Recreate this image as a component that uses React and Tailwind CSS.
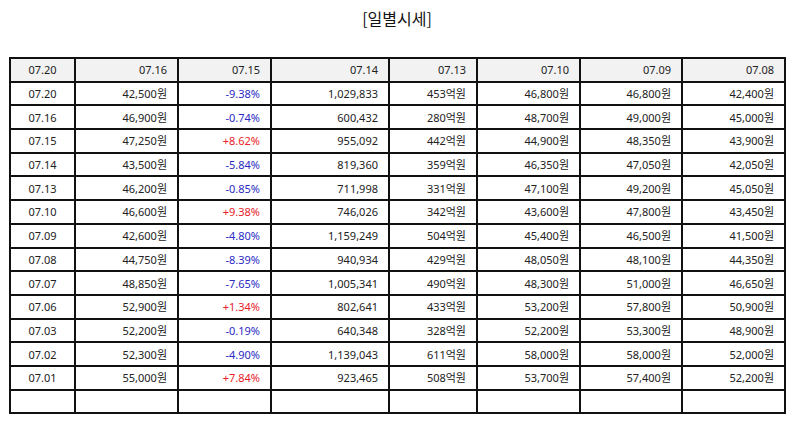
import React from 'react';

const headers = ['07.20', '07.16', '07.15', '07.14', '07.13', '07.10', '07.09', '07.08'];

const rows = [
  ['07.20', '42,500원', '-9.38%', '1,029,833', '453억원', '46,800원', '46,800원', '42,400원'],
  ['07.16', '46,900원', '-0.74%', '600,432', '280억원', '48,700원', '49,000원', '45,000원'],
  ['07.15', '47,250원', '+8.62%', '955,092', '442억원', '44,900원', '48,350원', '43,900원'],
  ['07.14', '43,500원', '-5.84%', '819,360', '359억원', '46,350원', '47,050원', '42,050원'],
  ['07.13', '46,200원', '-0.85%', '711,998', '331억원', '47,100원', '49,200원', '45,050원'],
  ['07.10', '46,600원', '+9.38%', '746,026', '342억원', '43,600원', '47,800원', '43,450원'],
  ['07.09', '42,600원', '-4.80%', '1,159,249', '504억원', '45,400원', '46,500원', '41,500원'],
  ['07.08', '44,750원', '-8.39%', '940,934', '429억원', '48,050원', '48,100원', '44,350원'],
  ['07.07', '48,850원', '-7.65%', '1,005,341', '490억원', '48,300원', '51,000원', '46,650원'],
  ['07.06', '52,900원', '+1.34%', '802,641', '433억원', '53,200원', '57,800원', '50,900원'],
  ['07.03', '52,200원', '-0.19%', '640,348', '328억원', '52,200원', '53,300원', '48,900원'],
  ['07.02', '52,300원', '-4.90%', '1,139,043', '611억원', '58,000원', '58,000원', '52,000원'],
  ['07.01', '55,000원', '+7.84%', '923,465', '508억원', '53,700원', '57,400원', '52,200원'],
];

const widths = ['w-[65px]', 'w-[103px]', 'w-[93px]', 'w-[118px]', 'w-[88px]', 'w-[103px]', 'w-[102px]', 'w-[103px]'];

const cell = 'border-2 border-[#111] h-[23.7px] px-[10px] py-0 text-[11px] leading-none';

export default function App() {
  return (
    <div className="w-[794px] h-[425px] bg-white text-[#222] font-['Noto_Sans','Noto_Sans_CJK_KR',sans-serif]">
      <h2 className="pt-[6px] h-[57px] text-center text-[16px] text-[#111] font-['Noto_Sans_CJK_KR',sans-serif]">[일별시세]</h2>
      <table className="ml-[9px] w-[775px] border-collapse table-fixed">
        <colgroup>
          {widths.map((w, i) => (
            <col key={i} className={w} />
          ))}
        </colgroup>
        <thead>
          <tr className="bg-[#f2f2f2]">
            {headers.map((h, i) => (
              <th key={i} className={`${cell} font-normal ${i === 0 ? 'text-center' : 'text-right'}`}>
                {h}
              </th>
            ))}
          </tr>
        </thead>
        <tbody>
          {rows.map((r, ri) => (
            <tr key={ri}>
              {r.map((v, i) => {
                let color = '';
                if (i === 2) color = v.startsWith('+') ? 'text-[#e8222b]' : 'text-[#2b2bc4]';
                return (
                  <td key={i} className={`${cell} ${i === 0 ? 'text-center' : 'text-right'} ${color}`}>
                    {v}
                  </td>
                );
              })}
            </tr>
          ))}
          <tr>
            {headers.map((_, i) => (
              <td key={i} className={cell}></td>
            ))}
          </tr>
        </tbody>
      </table>
    </div>
  );
}
